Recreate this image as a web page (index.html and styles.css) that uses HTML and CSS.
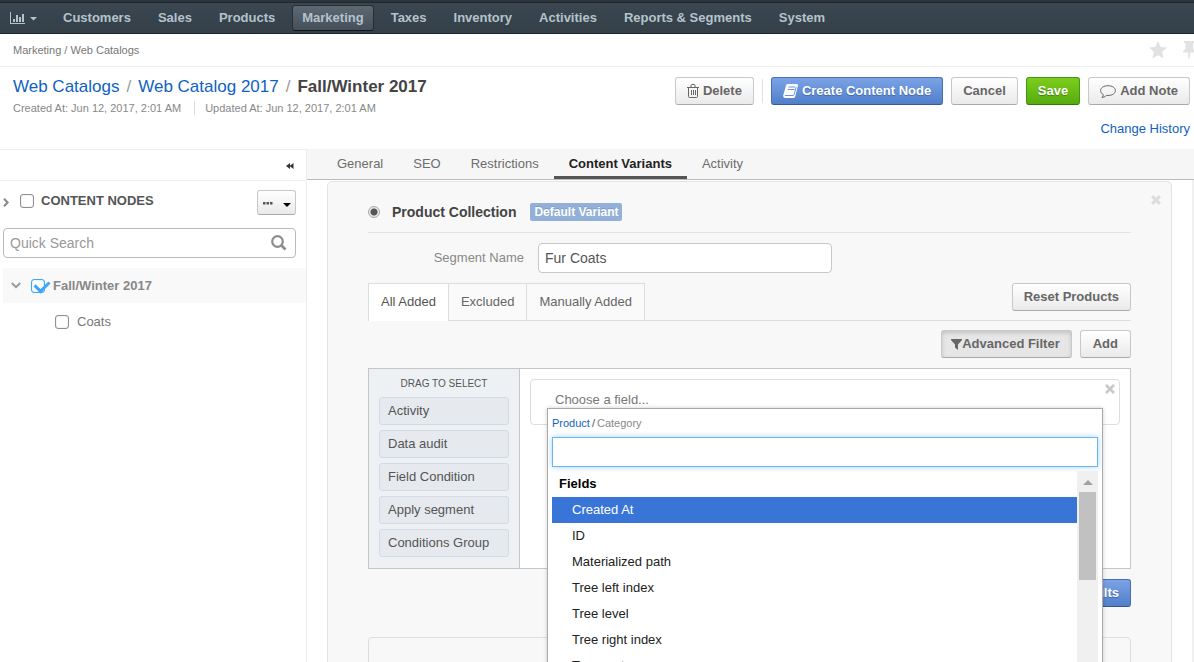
FILE: index.html
```html
<!DOCTYPE html>
<html lang="en">
<head>
<meta charset="utf-8">
<title>Fall/Winter 2017 - Web Catalogs</title>
<link rel="stylesheet" href="styles.css">
</head>
<body>
<header class="topbar">
  <nav class="nav">
    <button class="nav-dash" aria-label="Dashboards">
      <svg width="28" height="14" viewBox="0 0 28 14" fill="currentColor"><path d="M0 1h1v11h14v1H0zM3 8h2v3H3zM6 4h2v7H6zM9 6h2v5H9zM12 3h2v8h-2zM20 6h7l-3.500 3.500z"/></svg>
    </button>
    <a class="nav-item" href="#">Customers</a>
    <a class="nav-item" href="#">Sales</a>
    <a class="nav-item" href="#">Products</a>
    <a class="nav-item nav-item-active" href="#">Marketing</a>
    <a class="nav-item" href="#">Taxes</a>
    <a class="nav-item" href="#">Inventory</a>
    <a class="nav-item" href="#">Activities</a>
    <a class="nav-item" href="#">Reports &amp; Segments</a>
    <a class="nav-item" href="#">System</a>
  </nav>
</header>

<div class="crumbs">
  <span>Marketing&nbsp;/&nbsp;Web Catalogs</span>
  <div class="crumb-tools">
    <svg width="18" height="18" viewBox="0 0 18 18" fill="currentColor"><path d="M9 0l2.600 5.900 6.400.6-4.800 4.300 1.400 6.700L9 14.200l-5.600 3.300 1.400-6.700L0 6.500l6.400-.6z"/></svg>
    <svg width="11" height="18" viewBox="0 0 11 18" fill="currentColor"><path d="M1 0h10v2H10v6l3 3.500H7.500L6.500 18h-1l-.5-6.500H0c0-1.800 1-3 2.500-3.500V2H1z"/></svg>
  </div>
</div>

<section class="page-head">
  <div class="page-info">
    <h1 class="page-title"><a href="#">Web Catalogs</a><span class="sep">/</span><a href="#">Web Catalog 2017</a><span class="sep">/</span><strong>Fall/Winter 2017</strong></h1>
    <div class="page-meta"><span>Created At: Jun 12, 2017, 2:01 AM</span><span>Updated At: Jun 12, 2017, 2:01 AM</span></div>
  </div>
  <div class="page-side">
    <div class="actions">
      <button class="btn btn-icon"><svg width="12" height="14" viewBox="0 0 12 14" fill="none" stroke="currentColor"><path d="M0 3.500h12M4 3V1.500Q4 .5 5 .5h2q1 0 1 1V3M1.500 4v8.500q0 1 1 1h7q1 0 1-1V4M4.500 6v5M6.500 6v5M8.500 6v5"/></svg>Delete</button>
      <span class="divider"></span>
      <button class="btn btn-primary btn-icon"><svg width="15" height="14" viewBox="0 0 15 14"><path d="M4.500 0H14q1.300.3.900 1.700L12.200 12.500Q11.800 14 10.500 14H2Q-.2 13.600.2 11.500L3 1.500Q3.400.2 4.500 0z" fill="#fff"/><path d="M5.500 3h6.500M4.900 5.500h6.500M1.800 11.500h8.200q.8 0 1-.8L13.200 3" fill="none" stroke="#6a93d8"/></svg>Create Content Node</button>
      <button class="btn">Cancel</button>
      <button class="btn btn-success">Save</button>
      <button class="btn btn-icon"><svg width="16" height="13" viewBox="0 0 16 13" fill="none" stroke="currentColor"><path d="M8 .7c4.200 0 7.400 2.100 7.400 4.900S12.200 10.500 8 10.500l-1.500-.1C5.200 11.700 3.500 12.300 1.800 12.400c.9-.7 1.500-1.600 1.500-2.800C1.600 8.700.6 7.300.6 5.600.6 2.800 3.800.7 8 .7z"/></svg>Add Note</button>
    </div>
    <a class="history" href="#">Change History</a>
  </div>
</section>

<main class="body">
  <aside class="sidebar">
    <div class="sidebar-top">
      <button class="icon-btn" aria-label="Collapse sidebar"><svg width="8" height="6" viewBox="0 0 8 6" fill="#333"><path d="M0 3L4 0v6zM3.500 3l4-3v6z"/></svg></button>
    </div>
    <div class="tree-head">
      <svg width="6" height="9" viewBox="0 0 6 9" fill="none" stroke="#888" stroke-width="2"><path d="M1 .8L4.600 4.500 1 8.200"/></svg>
      <label class="tree-title"><input class="check" type="checkbox">CONTENT NODES</label>
      <button class="btn btn-more" aria-label="More actions"><svg width="29" height="10" viewBox="0 0 29 10"><path d="M1 4h2.500v2.500H1zM4.500 4H7v2.500H4.500zM8 4h2.500v2.500H8z" fill="#555"/><path d="M21 5h8L25 9z" fill="#000"/></svg></button>
    </div>
    <div class="search">
      <input type="search" placeholder="Quick Search" aria-label="Quick Search">
      <svg width="16" height="16" viewBox="0 0 16 16" fill="none" stroke="#8c8c8c"><circle cx="6.500" cy="6.500" r="5.300" stroke-width="2.200"/><path d="M10.500 10.500L14.500 14.500" stroke-width="2.600"/></svg>
    </div>
    <div class="node node-selected">
      <svg width="10" height="7" viewBox="0 0 10 7" fill="none" stroke="#999" stroke-width="2"><path d="M.8 1L5 5.200 9.200 1"/></svg>
      <label><input class="check" type="checkbox" checked>Fall/Winter 2017</label>
    </div>
    <div class="node node-child">
      <label><input class="check" type="checkbox">Coats</label>
    </div>
  </aside>

  <section class="content">
    <nav class="tabs">
      <a href="#">General</a>
      <a href="#">SEO</a>
      <a href="#">Restrictions</a>
      <a class="tab-active" href="#">Content Variants</a>
      <a href="#">Activity</a>
    </nav>
    <div class="scroll">
      <div class="panel">
        <button class="panel-close" aria-label="Remove variant"><svg width="10" height="10" viewBox="0 0 10 10" stroke="#ddd" stroke-width="3.200"><path d="M1.200 1.200l7.600 7.600M8.800 1.200L1.200 8.800"/></svg></button>
        <div class="variant-head">
          <label><input class="radio" type="radio" name="variant" checked>Product Collection</label>
          <span class="badge">Default Variant</span>
        </div>
        <div class="field-row">
          <label for="segment">Segment Name</label>
          <input id="segment" type="text" value="Fur Coats">
        </div>
        <div class="subtabs-row">
          <nav class="subtabs">
            <a class="subtab-active" href="#">All Added</a>
            <a href="#">Excluded</a>
            <a href="#">Manually Added</a>
          </nav>
          <button class="btn">Reset Products</button>
        </div>
        <div class="filter-actions">
          <button class="btn btn-pressed"><svg width="11" height="11" viewBox="0 0 11 11" fill="currentColor"><path d="M0 0h11v1L7 5.500V11L4 8.500v-3L0 1z"/></svg>Advanced Filter</button>
          <button class="btn">Add</button>
        </div>
        <div class="builder">
          <div class="palette">
            <div class="palette-title">DRAG TO SELECT</div>
            <div class="chip">Activity</div>
            <div class="chip">Data audit</div>
            <div class="chip">Field Condition</div>
            <div class="chip">Apply segment</div>
            <div class="chip">Conditions Group</div>
          </div>
          <div class="canvas">
            <div class="condition">
              <span class="condition-label">Choose a field...</span>
              <button class="icon-btn" aria-label="Remove condition"><svg width="10" height="10" viewBox="0 0 10 10" stroke="#c8c8c8" stroke-width="2.600"><path d="M1 1l8 8M9 1L1 9"/></svg></button>
              <div class="picker">
                <div class="picker-path"><a href="#">Product</a><span>/</span>Category</div>
                <input type="text" aria-label="Search fields">
                <div class="picker-body">
                  <ul class="options">
                    <li class="option-group">Fields</li>
                    <li class="option-active">Created At</li>
                    <li>ID</li>
                    <li>Materialized path</li>
                    <li>Tree left index</li>
                    <li>Tree level</li>
                    <li>Tree right index</li>
                    <li>Tree root</li>
                  </ul>
                  <div class="track">
                    <svg width="10" height="5" viewBox="0 0 10 5" fill="#a0a0a0"><path d="M0 5L5 0l5 5z"/></svg>
                    <div class="thumb"></div>
                  </div>
                </div>
              </div>
            </div>
          </div>
        </div>
        <div class="results"><button class="btn btn-primary">Preview Results</button></div>
        <div class="grid-box"></div>
      </div>
    </div>
  </section>
</main>
</body>
</html>
```
FILE: styles.css
```css
* { box-sizing: border-box; }

body {
  margin: 0;
  height: 100vh;
  overflow: hidden;
  display: flex;
  flex-direction: column;
  background: #fff;
  color: #555;
  font: 13px/18px "Liberation Sans", Arial, sans-serif;
}

a { color: #0f62c4; text-decoration: none; }
button, input { font: inherit; color: inherit; }
svg { flex: none; overflow: hidden; }

.icon-btn, .nav-dash, .panel-close {
  display: flex;
  padding: 0;
  border: 0;
  background: none;
}

/* Top navigation */
.topbar {
  flex: none;
  border-top: 2px solid #2c343b;
  border-bottom: 1px solid #1d242c;
  background: linear-gradient(#3b4851, #343f48);
  box-shadow: inset 0 1px #1f262d;
}
.nav {
  display: flex;
  align-items: center;
  gap: 7px;
  height: 31px;
  padding: 1px 8px 0 10px;
}
.nav-dash { width: 36px; color: #b4c3cb; }
.nav-item {
  padding: 3px 9px;
  border: 1px solid transparent;
  border-radius: 3px;
  color: #b4c3cb;
  font-weight: bold;
  white-space: nowrap;
}
.nav-item-active {
  border-color: #262d34 #262d34 #11161b;
  background: linear-gradient(#5d6873, #454f5a);
}

/* Breadcrumbs */
.crumbs {
  flex: none;
  display: flex;
  align-items: center;
  justify-content: space-between;
  height: 33px;
  padding-left: 13px;
  border-bottom: 1px solid #efefef;
  color: #777;
  font-size: 11px;
}
.crumb-tools { display: flex; gap: 16px; color: #e2e2e2; }

/* Page heading */
.page-head {
  flex: none;
  display: flex;
  justify-content: space-between;
  height: 82px;
  padding: 10px 4px 0 13px;
}
.page-title {
  margin: 0;
  font-size: 17px;
  font-weight: normal;
  line-height: 20px;
}
.page-title strong { color: #444; }
.sep { margin: 0 7px; color: #999; }
.page-meta {
  display: flex;
  margin-top: 4px;
  color: #888;
  font-size: 11px;
  line-height: 14px;
}
.page-meta span + span {
  margin-left: 13px;
  padding-left: 10px;
  border-left: 1px solid #ddd;
}
.page-side {
  display: flex;
  flex-direction: column;
  align-items: flex-end;
  gap: 15px;
}
.actions { display: flex; gap: 8px; }
.divider { width: 1px; margin: 2px 0; background: #e2e2e2; }

.btn {
  display: flex;
  align-items: center;
  height: 28px;
  padding: 0 11px;
  border: 1px solid #c8c8c8;
  border-bottom-color: #aaa;
  border-radius: 3px;
  background: linear-gradient(#fff, #eaeaea);
  color: #666;
  font-weight: bold;
  white-space: nowrap;
}
.btn-icon { gap: 4px; }
.btn-primary {
  border-color: #4a6fae #4a6fae #38588f;
  background: linear-gradient(#7ba3e6, #517fca);
  color: #fff;
  text-shadow: 0 1px 1px #3f66a4;
}
.btn-success {
  border-color: #419510 #419510 #337a0a;
  background: linear-gradient(#7dcd1e, #55ac0d);
  color: #fff;
  text-shadow: 0 1px 1px #3f8009;
}
.btn-pressed {
  background: #e6e6e6;
  box-shadow: inset 0 2px 4px #c2c2c2;
}

/* Body */
.body { flex: 1; display: flex; min-height: 0; }

.sidebar {
  flex: none;
  width: 307px;
  border-right: 1px solid #eee;
}
.sidebar-top {
  display: flex;
  align-items: center;
  justify-content: flex-end;
  height: 32px;
  padding: 2px 12px 0 0;
  border-top: 1px solid #eee;
  border-bottom: 1px solid #eee;
}
.tree-head {
  display: flex;
  align-items: center;
  gap: 11px;
  padding: 9px 10px 0 3px;
}
.sidebar label { display: flex; align-items: center; }
.tree-title { flex: 1; gap: 7px; font-weight: bold; padding-bottom: 4px; }
.btn-more { width: 39px; height: 25px; padding: 0; justify-content: center; }

.check {
  appearance: none;
  position: relative;
  width: 14px;
  height: 14px;
  margin: 0;
  border: 1px solid #8f8f8f;
  border-radius: 3px;
  background: #fff;
  box-shadow: inset 0 0 1px #999;
}
.check:checked { border-color: #3da5fb; box-shadow: inset 0 0 1px #3da5fb; }
.check:checked::after {
  content: "";
  position: absolute;
  left: 5px;
  top: -2px;
  width: 7px;
  height: 11px;
  border: solid #3da5fb;
  border-width: 0 3px 3px 0;
  transform: rotate(45deg);
}

.search {
  display: flex;
  align-items: center;
  height: 30px;
  margin: 13px 10px 10px 3px;
  padding: 0 8px 0 6px;
  border: 1px solid #bbb;
  border-radius: 4px;
  font-size: 14px;
}
.search input {
  flex: 1;
  min-width: 0;
  padding: 0;
  border: 0;
  outline: 0;
  background: none;
}
.search input::placeholder { color: #999; }

.node {
  display: flex;
  align-items: center;
  height: 35px;
  color: #777;
}
.node-selected {
  gap: 10px;
  margin-left: 3px;
  padding-left: 8px;
  background: #f9f9f9;
  color: #888;
  font-weight: bold;
}
.node-child { padding: 3px 0 0 55px; }
.node label { gap: 8px; }

/* Content */
.content { flex: 1; min-width: 0; display: flex; flex-direction: column; }
.tabs {
  flex: none;
  display: flex;
  height: 31px;
  padding-left: 15px;
  border-bottom: 1px solid #bbb;
  background: #f6f6f6;
}
.tabs a {
  padding: 6px 15px 0;
  border-bottom: 3px solid transparent;
  color: #6d6d6d;
}
.tabs .tab-active {
  border-bottom-color: #555;
  color: #222;
  font-weight: bold;
}
.scroll {
  flex: 1;
  min-height: 0;
  overflow: hidden;
  padding: 1px 20px 0;
  border-right: 2px solid #f0f0f0;
}
.panel {
  position: relative;
  padding: 0 40px;
  border: 1px solid #e3e3e3;
  border-radius: 5px 5px 0 0;
  background: #f8f8f8;
}
.panel-close { position: absolute; top: 13px; right: 10px; }
.variant-head {
  display: flex;
  align-items: center;
  gap: 14px;
  height: 51px;
  padding-top: 10px;
  border-bottom: 1px solid #e3e3e3;
}
.variant-head label {
  display: flex;
  align-items: center;
  gap: 12px;
  color: #444;
  font-size: 14px;
  font-weight: bold;
}
.radio {
  appearance: none;
  width: 12px;
  height: 12px;
  margin: 0;
  border: 1px solid #aaa;
  border-radius: 50%;
  background: radial-gradient(circle, #555 0 3px, #e8e8e8 4px);
}
.badge {
  padding: 0 4px;
  border-radius: 2px;
  background: #93b1d8;
  color: #fff;
  font-size: 12px;
  font-weight: bold;
  text-shadow: 0 -1px #7d9bc4;
}
.field-row {
  display: flex;
  align-items: center;
  gap: 14px;
  margin-top: 10px;
  color: #888;
}
.field-row label { width: 156px; text-align: right; }
.field-row input {
  width: 294px;
  height: 30px;
  padding: 0 6px;
  border: 1px solid #c8c8c8;
  border-radius: 4px;
  background: #fff;
  color: #555;
  font-size: 14px;
}
.subtabs-row {
  display: flex;
  align-items: flex-start;
  justify-content: space-between;
  height: 38px;
  margin-top: 10px;
  border-bottom: 1px solid #ddd;
}
.subtabs { display: flex; border: solid #ddd; border-width: 1px 1px 0; }
.subtabs a {
  height: 36px;
  padding: 9px 12px 0;
  background: #fafafa;
  color: #666;
}
.subtabs a + a { border-left: 1px solid #ddd; }
.subtabs .subtab-active { height: 37px; background: #fff; color: #555; }

.filter-actions {
  display: flex;
  justify-content: flex-end;
  gap: 8px;
  margin: 9px 0 10px;
}
.filter-actions .btn { padding-right: 12px; padding-left: 12px; }
.filter-actions .btn-pressed { padding-right: 11px; padding-left: 9px; }

.builder {
  display: flex;
  height: 201px;
  border: 1px solid #c5c5c5;
}
.palette {
  display: flex;
  flex-direction: column;
  gap: 5px;
  width: 151px;
  padding: 6px 10px;
  border-right: 1px solid #c5c5c5;
  background: #edf1f4;
}
.palette-title { font-size: 10px; line-height: 17px; text-align: center; }
.chip {
  height: 28px;
  padding: 4px 8px;
  border: 1px solid #d3dae3;
  border-radius: 3px;
  background: #e6e9ee;
}
.canvas { flex: 1; padding: 10px; background: #fff; }
.condition {
  position: relative;
  display: flex;
  align-items: flex-start;
  justify-content: space-between;
  height: 46px;
  padding: 4px 4px 0 24px;
  border: 1px solid #ddd;
  border-radius: 4px;
  color: #777;
}
.condition-label { margin-top: 7px; }

/* Field picker popup */
.picker {
  position: absolute;
  z-index: 2;
  top: 28px;
  left: 16px;
  right: 16px;
  padding: 4px;
  border: 1px solid #aaa;
  background: #fff;
  box-shadow: 0 0 4px rgba(0, 0, 0, .2);
}
.picker-path {
  padding-top: 1px;
  color: #888;
  font-size: 11px;
}
.picker-path span { margin: 0 2px; color: #555; }
.picker input {
  display: block;
  width: 100%;
  height: 30px;
  margin: 5px 0 4px;
  border: 1px solid #6cb5ee;
  outline: 0;
  background: #fff;
  box-shadow: 0 0 6px #a3d3f8;
}
.picker-body { display: flex; height: 230px; overflow: hidden; }
.options {
  flex: 1;
  margin: 0;
  padding: 0;
  list-style: none;
  color: #222;
}
.options li { height: 26px; padding: 4px 20px; }
.options .option-group { padding-left: 7px; color: #000; font-weight: bold; }
.options .option-active { background: #3875d7; color: #fff; }
.track {
  display: flex;
  flex-direction: column;
  align-items: center;
  gap: 7px;
  width: 21px;
  padding-top: 9px;
  background: #f0f0f0;
}
.thumb { width: 17px; height: 88px; background: #c1c1c1; }

.results { display: flex; justify-content: flex-end; padding: 10px 0 30px; }
.grid-box {
  height: 120px;
  border: 1px solid #ddd;
  border-radius: 4px;
}
```
